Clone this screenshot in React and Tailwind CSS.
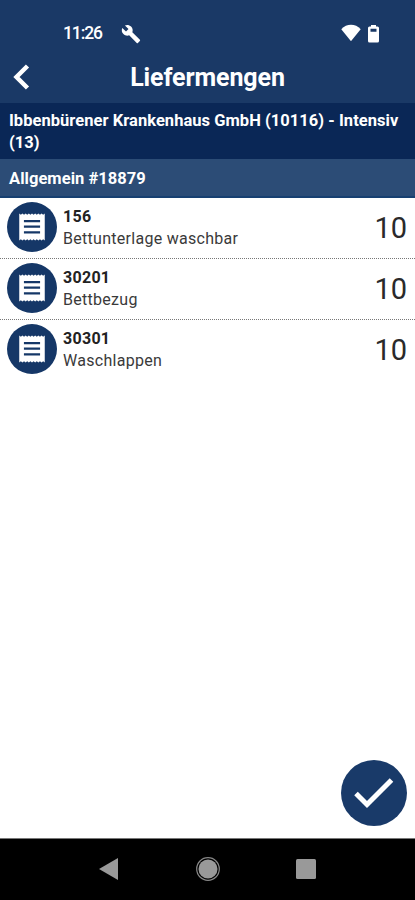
const ITEMS = [
  { id: "156", name: "Bettunterlage waschbar", amount: 10 },
  { id: "30201", name: "Bettbezug", amount: 10 },
  { id: "30301", name: "Waschlappen", amount: 10 },
];

const ReceiptIcon = () => (
  <svg viewBox="0 0 24 24" className="h-[34px] w-[34px]" fill="#ffffff">
    <path d="M17.700 16.600H6.300v-1.600h11.400zm0-4H6.300v-1.600h11.400zm0-4H6.300V7h11.400zM3 21.500l1.125-.8 1.125.8 1.125-.8 1.125.8 1.125-.8 1.125.8 1.125-.8 1.125.8 1.125-.8 1.125.8 1.125-.8 1.125.8 1.125-.8 1.125.8 1.125-.8 1.125.8V2.500l-1.125.8-1.125-.8-1.125.8-1.125-.8-1.125.8-1.125-.8-1.125.8-1.125-.8-1.125.8-1.125-.8-1.125.8-1.125-.8-1.125.8-1.125-.8-1.125.8L3 2.500z" />
  </svg>
);

const StatusBar = () => (
  <div className="flex h-[52px] items-start pt-[23px] pr-[35px] pl-[63px] text-white">
    <span className="w-[58px] text-[17.5px] leading-[21px] font-medium tracking-[-1.1px]">
      11:26
    </span>
    <svg viewBox="0 0 24 24" className="mt-px h-[20px] w-[20px]" fill="currentColor">
      <path d="M22.7 19l-9.1-9.1c.9-2.3.4-5-1.5-6.9-2-2-5-2.4-7.4-1.3L9 6 6 9 1.6 4.7C.4 7.1.9 10.1 2.9 12.1c1.9 1.9 4.6 2.4 6.9 1.5l9.1 9.1c.4.4 1 .4 1.4 0l2.3-2.3c.5-.4.5-1.1.1-1.4z" />
    </svg>
    <div className="ml-auto flex items-start gap-[6px]">
      <svg viewBox="0 0 20 17" className="mt-px h-[17px] w-[20px]" fill="currentColor">
        <path d="M10 17.200 0.300 5.300C3 2.100 6.400 0.800 10 0.800s7 1.300 9.700 4.500z" />
      </svg>
      <svg viewBox="0 0 13 19" className="mt-px h-[19px] w-[13px]" fill="currentColor">
        <path
          fillRule="evenodd"
          d="M4 1h5v1.6h1.5A1.5 1.5 0 0 1 12 4.100v13a1.500 1.500 0 0 1-1.500 1.500h-8A1.500 1.500 0 0 1 1 17.100v-13A1.500 1.500 0 0 1 2.500 2.600H4zM3.500 4.800v3h6v-3z"
        />
      </svg>
    </div>
  </div>
);

const TitleBar = () => (
  <div className="grid h-[51px] grid-cols-[60px_1fr_60px] items-start text-white">
    <svg viewBox="0 0 18 28" className="mt-[11px] ml-[12px] h-[28px] w-[18px]" fill="none">
      <path d="M15.500 3 4.500 14l11 11" stroke="currentColor" strokeWidth="4.500" />
    </svg>
    <h1 className="mt-[11px] text-center text-[25px] leading-[30px] font-bold tracking-[-0.1px]">
      Liefermengen
    </h1>
  </div>
);

const ItemRow = ({ item }) => (
  <li className="flex h-[61px] items-start border-b border-dotted border-[#777777] pr-[8px] pl-[7px] last:border-b-0">
    <div className="mt-[4px] flex h-[50px] w-[50px] shrink-0 items-center justify-center rounded-full bg-[#153767]">
      <ReceiptIcon />
    </div>
    <div className="mt-[8px] ml-[6px] text-[16px] leading-[22px] tracking-[0.28px] text-[#222222]">
      <p className="font-bold">{item.id}</p>
      <p className="text-[#3a3a3a]">{item.name}</p>
    </div>
    <p className="mt-[12px] ml-auto text-[29px] leading-[36px] text-[#2a2a2a]">
      {item.amount}
    </p>
  </li>
);

const NavBar = () => (
  <nav className="flex h-[62px] items-center justify-between border-t border-[#777777] bg-black pr-[98px] pb-[2px] pl-[98px]">
    <svg viewBox="0 0 22 24" className="h-[24px] w-[22px]" fill="#999999">
      <path d="M1 12 20 1v22z" />
    </svg>
    <svg viewBox="0 0 26 26" className="h-[26px] w-[26px]" fill="#999999">
      <circle cx="13" cy="13" r="9.500" />
      <circle cx="13" cy="13" r="11.300" fill="none" stroke="#888888" strokeWidth="1.200" />
    </svg>
    <svg viewBox="0 0 22 22" className="h-[22px] w-[22px]" fill="#999999">
      <rect x="1" y="1" width="20" height="20" rx="1.500" />
    </svg>
  </nav>
);

export default function App() {
  return (
    <div className="flex h-[900px] w-[415px] flex-col bg-white font-[Roboto,sans-serif]">
      <header className="bg-[#1a3966]">
        <StatusBar />
        <TitleBar />
      </header>

      <div className="h-[56px] bg-[#0a2756] pt-[7px] pr-[8px] pl-[9px] text-[16.5px] leading-[22px] font-bold tracking-[0.04px] text-white">
        Ibbenbürener Krankenhaus GmbH (10116) - Intensiv (13)
      </div>
      <div className="h-[39px] border-b-2 border-[#174071] bg-[#2c4c76] pt-[9px] pl-[9px] text-[16.5px] leading-[22px] font-bold tracking-[0.04px] text-white">
        Allgemein #18879
      </div>

      <ul>
        {ITEMS.map((item) => (
          <ItemRow key={item.id} item={item} />
        ))}
      </ul>

      <div className="mt-auto flex justify-end pr-[8px] pb-[12px]">
        <button className="flex h-[66px] w-[66px] items-center justify-center rounded-full bg-[#193a69]">
          <svg viewBox="0 0 42 34" className="h-[34px] w-[42px]" fill="none">
            <path d="M3 17.500 14 28.500 38.500 4" stroke="#ffffff" strokeWidth="5" />
          </svg>
        </button>
      </div>

      <NavBar />
    </div>
  );
}
